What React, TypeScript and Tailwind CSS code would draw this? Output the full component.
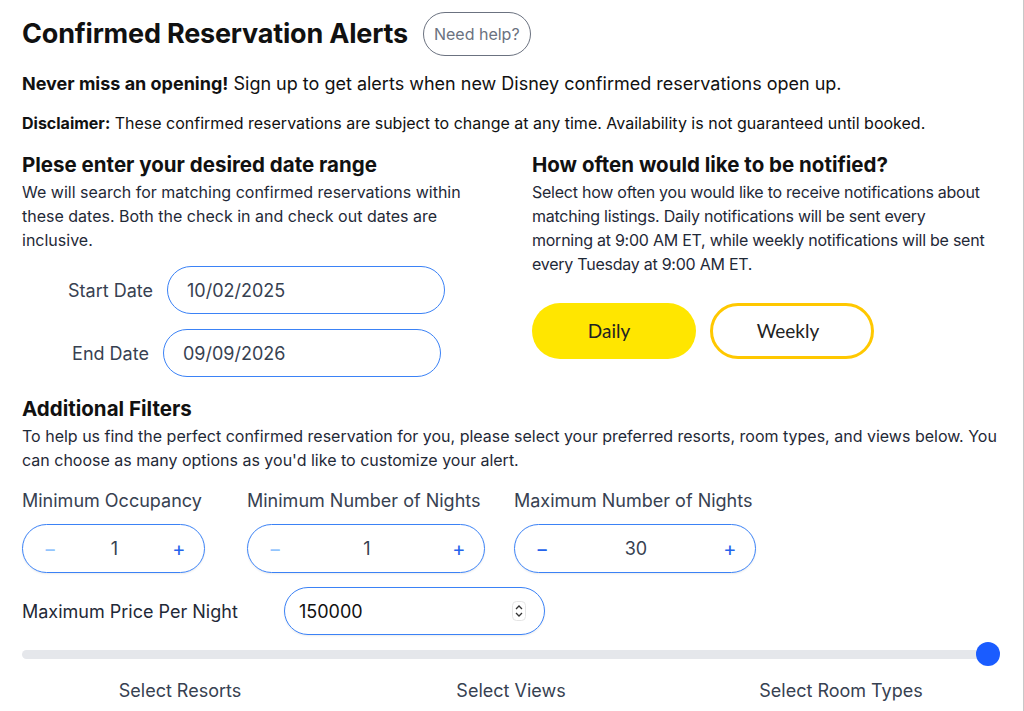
import React from "react";

function Stepper({ label, value, width, minusActive, className }: { label: string; value: string; width: string; minusActive: boolean; className?: string }) {
  return (
    <div className={`flex flex-col ${width} ${className ?? ""}`}>
      <div className="text-[18px] leading-[24px] text-[#374151] whitespace-nowrap">{label}</div>
      <div className="mt-[11px] h-[49px] rounded-full border-[1.5px] border-[#3b82f6] flex items-center justify-between pl-[20px] pr-[18px] shadow-[0_1px_2px_rgba(0,0,0,0.08)]">
        <span className={`text-[20px] ${minusActive ? "text-[#2563eb]" : "text-[#93c5fd]"} w-[14px] text-center`}>−</span>
        <span className="text-[18px] text-[#374151]">{value}</span>
        <span className="text-[20px] text-[#2563eb] w-[14px] text-center">+</span>
      </div>
    </div>
  );
}

export default function App() {
  return (
    <div className="w-[1024px] h-[711px] overflow-hidden bg-white font-['Inter',sans-serif] text-[#111] relative border-r border-[#c8c8c8]">
      <div className="pl-[22px] pr-[24px] pt-[12px]">
        <div className="flex items-center">
          <h1 className="text-[27px] font-bold tracking-[-0.2px] leading-[44px] text-[#111]">Confirmed Reservation Alerts</h1>
          <button className="ml-[15px] h-[44px] px-[10px] rounded-full border border-[#6b7280] text-[16px] text-[#6b7280]">Need help?</button>
        </div>
        <p className="mt-[13px] text-[18px] leading-[30px]">
          <span className="font-bold">Never miss an opening!</span> Sign up to get alerts when new Disney confirmed reservations open up.
        </p>
        <p className="mt-[12px] text-[16px] leading-[24px]">
          <span className="font-bold">Disclaimer:</span> These confirmed reservations are subject to change at any time. Availability is not guaranteed until booked.
        </p>

        <div className="mt-[16px] grid grid-cols-[469px_1fr] gap-[41px]">
          <div>
            <h2 className="text-[20.5px] font-bold leading-[28px]">Plese enter your desired date range</h2>
            <p className="mt-[1px] text-[16px] leading-[24px] text-[#1f2937] w-[460px]">
              We will search for matching confirmed reservations within these dates. Both the check in and check out dates are inclusive.
            </p>
            <div className="mt-[14px] flex items-center justify-center gap-[14px]">
              <span className="text-[18px] text-[#374151]">Start Date</span>
              <div className="w-[278px] h-[48px] rounded-full border-[1.5px] border-[#3b82f6] flex items-center pl-[19px] text-[18px] text-[#374151]">10/02/2025</div>
            </div>
            <div className="mt-[15px] flex items-center justify-center gap-[14px]">
              <span className="text-[18px] text-[#374151]">End Date</span>
              <div className="w-[278px] h-[48px] rounded-full border-[1.5px] border-[#3b82f6] flex items-center pl-[19px] text-[18px] text-[#374151]">09/09/2026</div>
            </div>
          </div>
          <div>
            <h2 className="text-[20.5px] font-bold leading-[28px]">How often would like to be notified?</h2>
            <p className="mt-[1px] text-[16px] leading-[24px] text-[#1f2937] tracking-[-0.25px] whitespace-nowrap">
              Select how often you would like to receive notifications about
              <br />
              matching listings. Daily notifications will be sent every
              <br />
              morning at 9:00 AM ET, while weekly notifications will be sent
              <br />
              every Tuesday at 9:00 AM ET.
            </p>
            <div className="mt-[27px] flex gap-[14px]">
              <button className="w-[164px] h-[56px] rounded-full bg-[#ffe600] font-['Lato',sans-serif] text-[19px] text-[#222] pr-[10px]">Daily</button>
              <button className="w-[164px] h-[56px] rounded-full border-[3px] border-[#ffc800] bg-white font-['Lato',sans-serif] text-[19px] text-[#222] pr-[8px]">Weekly</button>
            </div>
          </div>
        </div>

        <h2 className="mt-[18px] text-[20.5px] font-bold leading-[28px]">Additional Filters</h2>
        <p className="mt-[1px] text-[16px] leading-[24px] text-[#1f2937] w-[978px]">
          To help us find the perfect confirmed reservation for you, please select your preferred resorts, room types, and views below. You can choose as many options as you'd like to customize your alert.
        </p>

        <div className="mt-[17px] flex">
          <Stepper label="Minimum Occupancy" value="1" width="w-[183px]" minusActive={false} />
          <Stepper label="Minimum Number of Nights" value="1" width="w-[238px]" minusActive={false} className="ml-[42px]" />
          <Stepper label="Maximum Number of Nights" value="30" width="w-[242px]" minusActive={true} className="ml-[29px]" />
        </div>

        <div className="mt-[14px] flex items-center">
          <span className="text-[18px] text-[#1f2937] w-[262px]">Maximum Price Per Night</span>
          <div className="w-[261px] h-[48px] rounded-full border-[1.5px] border-[#3b82f6] flex items-center justify-between pl-[14px] pr-[18px] shadow-[0_1px_2px_rgba(0,0,0,0.08)]">
            <span className="text-[18px] text-[#111]">150000</span>
            <svg width="14" height="20" viewBox="0 0 14 20" className="text-[#333]">
              <rect x="0.5" y="0.5" width="13" height="19" rx="4" fill="#fff" stroke="#e5e5e5" />
              <path d="M4 8 L7 5 L10 8" fill="none" stroke="currentColor" strokeWidth="1.3" />
              <path d="M4 12 L7 15 L10 12" fill="none" stroke="currentColor" strokeWidth="1.3" />
            </svg>
          </div>
        </div>

        <div className="mt-[7px] relative h-[24px] w-[978px] flex items-center">
          <div className="h-[9px] w-[968px] rounded-full bg-[#e5e7eb]" />
          <div className="absolute left-[954px] top-0 w-[24px] h-[24px] rounded-full bg-[#1a5cff]" />
        </div>

        <div className="mt-[13px] grid grid-cols-3 w-[978px] text-[18px] text-[#374151] leading-[24px]">
          <div className="text-center pr-[10px]">Select Resorts</div>
          <div className="text-center">Select Views</div>
          <div className="text-center pl-[8px]">Select Room Types</div>
        </div>
      </div>
    </div>
  );
}
